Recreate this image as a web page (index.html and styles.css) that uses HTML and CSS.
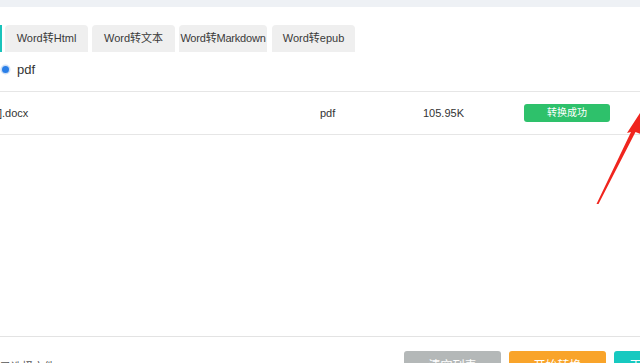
FILE: index.html
```html
<!DOCTYPE html>
<html>
<head>
<meta charset="utf-8">
<link rel="stylesheet" href="styles.css">
</head>
<body>
<div class="page">
  <div class="topbar"></div>
  <div class="tabs">
    <div class="tab-active"></div>
    <div class="tab w83">Word转Html</div>
    <div class="tab w83">Word转文本</div>
    <div class="tab w88">Word转Markdown</div>
    <div class="tab w83">Word转epub</div>
  </div>
  <div class="radio-row">
    <span class="radio"></span>
    <span class="radio-label">pdf</span>
  </div>
  <div class="table">
    <div class="row">
      <div class="c-name">].docx</div>
      <div class="c-fmt">pdf</div>
      <div class="c-size">105.95K</div>
      <div class="c-status"><span class="badge">转换成功</span></div>
    </div>
  </div>
  <div class="spacer"></div>
  <div class="footer">
    <div class="foot-text">已选择文件：1</div>
    <div class="buttons">
      <div class="btn gray">清空列表</div>
      <div class="btn orange">开始转换</div>
      <div class="btn teal">下载</div>
    </div>
  </div>
  <svg class="arrow" width="60" height="120" viewBox="590 100 60 120">
    <polygon points="596.5,204 631,132 627,133 642,110 646,136 635.5,132 598.5,204" fill="#f0251e"/>
  </svg>
</div>
</body>
</html>
```
FILE: styles.css
```css
* { box-sizing: border-box; }
html, body { margin: 0; padding: 0; }
body {
  width: 640px;
  height: 363px;
  overflow: hidden;
  background: #fff;
  font-family: "Liberation Sans", "Noto Sans CJK SC", sans-serif;
  color: #333;
}
.page { position: relative; width: 640px; height: 363px; overflow: hidden; }
.topbar { height: 7px; background: #eef1f5; }
.tabs {
  display: flex;
  margin-top: 18px;
  height: 27px;
  gap: 4px;
}
.tab-active { width: 2px; background: #19c3bb; margin-right: -1px; }
.tab {
  background: #efefef;
  border-radius: 4px 4px 0 0;
  font-size: 11px;
  line-height: 27px;
  text-align: center;
  color: #3a3a3a;
  white-space: nowrap;
}
.w83 { width: 83px; }
.w88 { width: 88px; letter-spacing: -0.2px; }
.tab:last-child { margin-left: 1px; }
.radio-row {
  display: flex;
  align-items: center;
  height: 24px;
  margin-top: 5px;
}
.radio {
  width: 7px;
  height: 7px;
  border-radius: 50%;
  background: #2a7fe8;
  box-shadow: 0 0 0 1.5px #cfe0f6;
  margin-left: 2px;
}
.radio-label { font-size: 13px; margin-left: 8px; color: #333; }
.table {
  margin-top: 10px;
  border-top: 1px solid #e6e6e6;
  border-bottom: 1px solid #e6e6e6;
}
.row {
  display: grid;
  grid-template-columns: 320px 103px 101px 1fr;
  align-items: center;
  height: 42px;
  font-size: 11px;
  color: #333;
}
.c-name { margin-left: -1px; }
.badge {
  display: inline-block;
  width: 86px;
  height: 18px;
  line-height: 18px;
  border-radius: 3px;
  background: #2ec16b;
  color: #fff;
  font-size: 10px;
  text-align: center;
}
.spacer { height: 202px; border-bottom: 1px solid #e3e3e3; }
.footer {
  display: flex;
  justify-content: space-between;
  padding-top: 14px;
}
.foot-text { font-size: 11px; color: #555; padding-top: 7px; }
.buttons { display: flex; gap: 8px; margin-right: -30px; }
.btn {
  width: 97px;
  height: 30px;
  border-radius: 3px;
  color: #fff;
  font-size: 12px;
  line-height: 30px;
  text-align: center;
}
.gray { background: #b4b8b8; }
.orange { background: #f9a42a; }
.teal { background: #17c9c0; width: 56px; }
.arrow { position: absolute; left: 590px; top: 100px; }
```
